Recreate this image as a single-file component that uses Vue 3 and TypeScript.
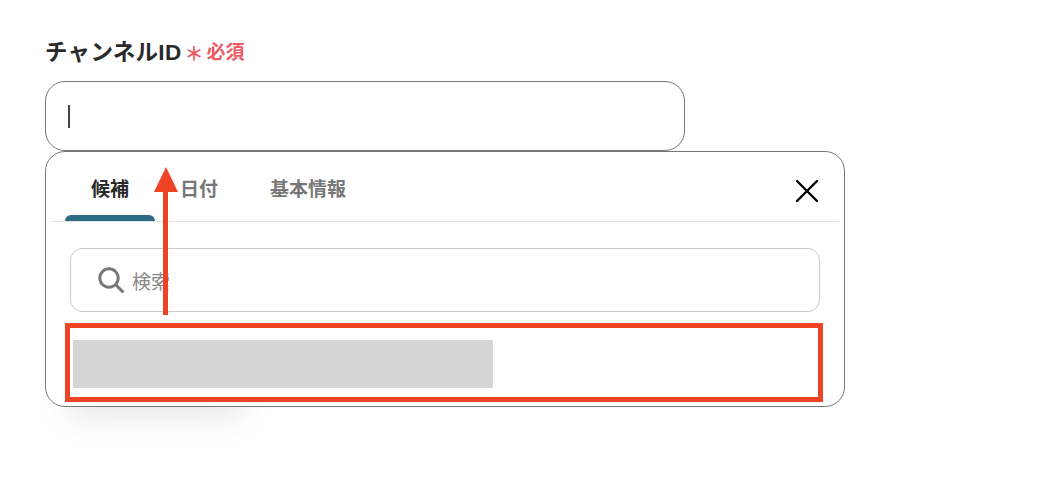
<template>
  <div class="page">
    <div class="field-label">
      <span class="label-text">チャンネルID</span>
      <span class="asterisk">＊</span>
      <span class="required">必須</span>
    </div>
    <div class="text-input"><span class="caret"></span></div>

    <div class="panel-wrap">
      <div class="panel-shadow"></div>
      <div class="panel">
        <div class="tabs">
          <div
            v-for="(tab, index) in tabs"
            :key="tab"
            class="tab"
            :class="{ active: index === 0 }"
          >
            {{ tab }}
          </div>
          <svg class="close-icon" width="24" height="24" viewBox="0 0 24 24">
            <path d="M2 2 L22 22 M22 2 L2 22" stroke="#000" stroke-width="2.4" stroke-linecap="round" fill="none" />
          </svg>
        </div>
        <div class="panel-body">
          <div class="search-box">
            <svg class="search-icon" width="26" height="26" viewBox="0 0 26 26">
              <circle cx="11" cy="11" r="9.2" stroke="#777" stroke-width="3" fill="none" />
              <path d="M18 18 L24.4 24.4" stroke="#777" stroke-width="3" stroke-linecap="round" />
            </svg>
            <span class="search-placeholder">検索</span>
          </div>
          <div class="result-row">
            <div class="result-mask"></div>
          </div>
        </div>
      </div>

      <!-- 注釈: 赤枠と矢印 -->
      <div class="highlight-box"></div>
      <svg class="arrow" width="24" height="148" viewBox="0 0 24 148">
        <path d="M12 0 L24 25 L0 25 Z" fill="#ee4423" />
        <rect x="9" y="24" width="5" height="124" fill="#ee4423" />
      </svg>
    </div>
  </div>
</template>

<script setup lang="ts">
const tabs: string[] = ['候補', '日付', '基本情報'];
</script>

<style>
html,
body {
  background: #fff;
}
</style>

<style scoped>
.page {
  width: 1040px;
  height: 486px;
  box-sizing: border-box;
  padding: 33px 0 0 45px;
  overflow: hidden;
  font-family: "Liberation Sans", "Noto Sans CJK JP", sans-serif;
  background: #fff;
}

.field-label {
  display: flex;
  align-items: center;
  height: 34px;
  margin-bottom: 14px;
}

.label-text {
  font-size: 22.5px;
  font-weight: 700;
  letter-spacing: 0.3px;
  color: #2a2a2a;
}

.asterisk {
  margin-left: 3px;
  margin-top: 5px;
  font-size: 19px;
  font-weight: 700;
  color: #ee5a66;
}

.required {
  margin-left: 3px;
  margin-top: 1px;
  font-size: 19px;
  font-weight: 700;
  color: #ee5a66;
}

.text-input {
  width: 640px;
  height: 70px;
  box-sizing: border-box;
  display: flex;
  align-items: center;
  padding-left: 22px;
  border: 1px solid #777;
  border-radius: 20px;
  background: #fff;
}

.caret {
  width: 2px;
  height: 23px;
  background: #444;
}

.panel-wrap {
  position: relative;
  width: 800px;
}

.panel-shadow {
  position: absolute;
  left: 30px;
  bottom: 6px;
  width: 160px;
  height: 50px;
  box-shadow: 0 10px 30px 6px rgba(60, 70, 80, 0.13);
}

.panel {
  position: relative;
  height: 256px;
  box-sizing: border-box;
  border: 1px solid #777;
  border-radius: 20px;
  background: #fff;
}

.tabs {
  position: relative;
  display: flex;
  height: 69px;
  margin: 0 5px;
  padding-left: 14px;
  border-bottom: 1px solid #e4e4e4;
}

.tab {
  position: relative;
  display: flex;
  align-items: center;
  justify-content: center;
  height: 69px;
  padding: 2px 26px 0;
  box-sizing: border-box;
  font-size: 19px;
  font-weight: 700;
  color: #777;
}

.tab.active {
  width: 90px;
  margin-right: -1px;
  color: #2a2a2a;
}

.tab.active::after {
  content: "";
  position: absolute;
  left: 0;
  right: 0;
  bottom: 0;
  height: 6px;
  border-radius: 6px 6px 0 0;
  background: #2d6a84;
}

.close-icon {
  position: absolute;
  right: 20px;
  top: 27px;
}

.panel-body {
  padding: 26px 24px 0;
}

.search-box {
  display: flex;
  align-items: center;
  height: 64px;
  box-sizing: border-box;
  padding-left: 27px;
  border: 1px solid #ccc;
  border-radius: 12px;
}

.search-placeholder {
  margin-left: 8px;
  font-size: 19px;
  color: #888;
}

.result-row {
  padding: 28px 0 0 3px;
}

.result-mask {
  width: 420px;
  height: 48px;
  background: #d5d5d5;
}

.highlight-box {
  position: absolute;
  left: 20px;
  top: 172px;
  width: 758px;
  height: 79px;
  box-sizing: border-box;
  border: 5px solid #ee4423;
}

.arrow {
  position: absolute;
  left: 109px;
  top: 16px;
}
</style>
